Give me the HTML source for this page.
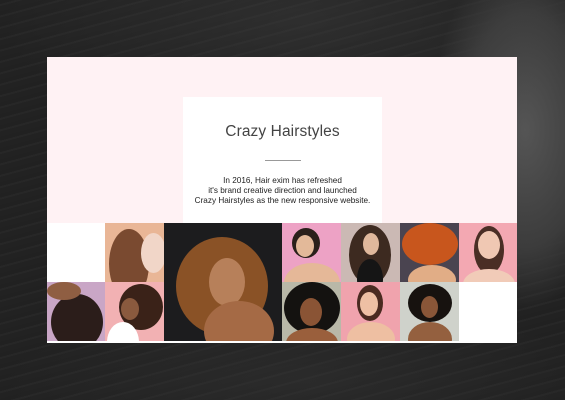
<!DOCTYPE html>
<html><head><style>
*{margin:0;padding:0;box-sizing:border-box}
body{width:565px;height:400px;overflow:hidden;background:#222;position:relative;font-family:"Liberation Sans",sans-serif}
.bg{position:absolute;inset:0;background:
radial-gradient(ellipse 95px 180px at 525px 130px,#555,#3c3c3c 65%,transparent 100%),
repeating-linear-gradient(165deg,#212121 0 4px,#272727 4px 6px,#222 6px 11px);}
.bg2{position:absolute;inset:0;background:radial-gradient(ellipse 300px 120px at 300px 20px,rgba(70,70,70,.35),transparent),radial-gradient(ellipse 300px 80px at 300px 380px,rgba(60,60,60,.35),transparent)}
.card{position:absolute;left:47px;top:57px;width:470px;height:286px;background:#fff2f4;border-bottom:2px solid #fff}
.box{position:absolute;left:136px;top:40px;width:199px;height:126px;background:#fff;text-align:center}
.box h1{font-weight:normal;font-size:15.5px;color:#444;margin-top:26px;letter-spacing:.1px}
.box hr{border:0;border-top:1px solid #999;width:36px;margin:19px auto 0}
.box p{font-size:8.2px;line-height:10px;color:#222;margin-top:15px}
.c{position:absolute;overflow:hidden}
.e{position:absolute;border-radius:50%}
</style></head><body>
<div class="bg"></div><div class="bg2"></div>
<div class="card">
<div class="box"><h1>Crazy Hairstyles</h1><hr><p>In 2016, Hair exim has refreshed<br>it's brand creative direction and launched<br>Crazy Hairstyles as the new responsive website.</p></div>
</div>
<div class="c" style="left:47px;top:223px;width:58px;height:59px;background:#fff"></div>
<div class="c" style="left:105px;top:223px;width:59px;height:59px;background:#e9b696">
 <div class="e" style="left:4px;top:6px;width:40px;height:70px;background:#7a4a30"></div>
 <div class="e" style="left:36px;top:10px;width:25px;height:40px;background:#f1d6c8"></div>
</div>
<div class="c" style="left:164px;top:223px;width:118px;height:118px;background:#1c1c1e">
 <div class="e" style="left:12px;top:14px;width:92px;height:98px;background:#8a5226"></div>
 <div class="e" style="left:45px;top:35px;width:36px;height:48px;background:#b7805a"></div>
 <div class="e" style="left:40px;top:78px;width:70px;height:60px;background:#a56a45"></div>
</div>
<div class="c" style="left:282px;top:223px;width:59px;height:59px;background:#eda2c5">
 <div class="e" style="left:10px;top:5px;width:28px;height:30px;background:#2a1f1a"></div>
 <div class="e" style="left:14px;top:12px;width:18px;height:22px;background:#e3b999"></div>
 <div class="e" style="left:2px;top:40px;width:56px;height:40px;background:#e5b898"></div>
</div>
<div class="c" style="left:341px;top:223px;width:59px;height:59px;background:#cbb9b4">
 <div class="e" style="left:8px;top:2px;width:42px;height:60px;background:#3d2a20"></div>
 <div class="e" style="left:22px;top:10px;width:16px;height:22px;background:#e0b89c"></div>
 <div class="e" style="left:16px;top:36px;width:26px;height:40px;background:#151515"></div>
</div>
<div class="c" style="left:400px;top:223px;width:59px;height:59px;background:#4a4450">
 <div class="e" style="left:2px;top:0;width:56px;height:42px;background:#c8561d"></div>
 <div class="e" style="left:8px;top:42px;width:48px;height:30px;background:#e1ad86"></div>
</div>
<div class="c" style="left:459px;top:223px;width:58px;height:59px;background:#f3a8b2">
 <div class="e" style="left:15px;top:3px;width:30px;height:48px;background:#4a2e25"></div>
 <div class="e" style="left:19px;top:8px;width:22px;height:28px;background:#f0c8b3"></div>
 <div class="e" style="left:4px;top:46px;width:52px;height:30px;background:#f1cbb8"></div>
</div>
<div class="c" style="left:47px;top:282px;width:58px;height:59px;background:#c9a6c6">
 <div class="e" style="left:4px;top:12px;width:52px;height:56px;background:#2b1d1a"></div>
 <div class="e" style="left:0;top:0;width:34px;height:18px;background:#8f5e42"></div>
</div>
<div class="c" style="left:105px;top:282px;width:59px;height:59px;background:#f2b1b3">
 <div class="e" style="left:14px;top:2px;width:44px;height:46px;background:#3a2218"></div>
 <div class="e" style="left:16px;top:16px;width:18px;height:22px;background:#8a5a3e"></div>
 <div class="e" style="left:2px;top:40px;width:32px;height:40px;background:#fff"></div>
</div>
<div class="c" style="left:282px;top:282px;width:59px;height:59px;background:#b9b8a8">
 <div class="e" style="left:2px;top:0;width:56px;height:52px;background:#141210"></div>
 <div class="e" style="left:18px;top:16px;width:22px;height:28px;background:#8a5435"></div>
 <div class="e" style="left:4px;top:46px;width:52px;height:30px;background:#9a5f3c"></div>
</div>
<div class="c" style="left:341px;top:282px;width:59px;height:59px;background:#f0a3ad">
 <div class="e" style="left:16px;top:3px;width:26px;height:36px;background:#4a2a20"></div>
 <div class="e" style="left:19px;top:10px;width:18px;height:24px;background:#eec0a4"></div>
 <div class="e" style="left:6px;top:40px;width:48px;height:34px;background:#eebfa2"></div>
</div>
<div class="c" style="left:400px;top:282px;width:59px;height:59px;background:#cfd2cb">
 <div class="e" style="left:8px;top:2px;width:44px;height:38px;background:#17120f"></div>
 <div class="e" style="left:21px;top:14px;width:17px;height:22px;background:#8a5638"></div>
 <div class="e" style="left:8px;top:40px;width:44px;height:34px;background:#94603f"></div>
</div>
<div class="c" style="left:459px;top:282px;width:58px;height:59px;background:#fff"></div>
</body></html>
